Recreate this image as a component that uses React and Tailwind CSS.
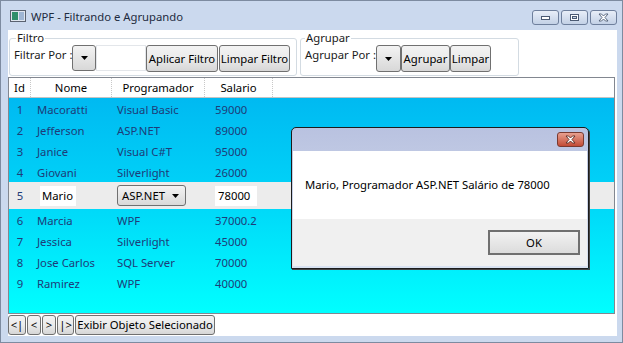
import React from 'react';

const rows = [
  { id: 1, nome: 'Macoratti', prog: 'Visual Basic', sal: '59000' },
  { id: 2, nome: 'Jefferson', prog: 'ASP.NET', sal: '89000' },
  { id: 3, nome: 'Janice', prog: 'Visual C#T', sal: '95000' },
  { id: 4, nome: 'Giovani', prog: 'Silverlight', sal: '26000' },
  { id: 5, nome: 'Mario', prog: 'ASP.NET', sal: '78000', editing: true },
  { id: 6, nome: 'Marcia', prog: 'WPF', sal: '37000.2' },
  { id: 7, nome: 'Jessica', prog: 'Silverlight', sal: '45000' },
  { id: 8, nome: 'Jose Carlos', prog: 'SQL Server', sal: '70000' },
  { id: 9, nome: 'Ramirez', prog: 'WPF', sal: '40000' },
];

const btn =
  'h-full flex items-center justify-center rounded-[3px] border border-[#707070] bg-gradient-to-b from-[#f3f3f3] via-[#ebebeb] to-[#d6d6d6] text-black whitespace-nowrap';

// Little drop arrow used by the combo boxes
function Arrow() {
  return (
    <svg width="7" height="4" viewBox="0 0 7 4">
      <path d="M0 0h7L3.5 4z" fill="#000" />
    </svg>
  );
}

function CaptionButton({ kind }) {
  return (
    <div className="w-[27px] h-[15px] rounded-[3px] border border-[#6e7f9c] bg-gradient-to-b from-[#e8eef8] to-[#c3d1e6] flex items-center justify-center">
      {kind === 'min' && (
        <svg width="11" height="7" viewBox="0 0 11 7">
          <rect x="1.5" y="2.5" width="8" height="3" fill="#fff" stroke="#4b5a73" />
        </svg>
      )}
      {kind === 'max' && (
        <svg width="11" height="9" viewBox="0 0 11 9">
          <rect x="1.5" y="1.5" width="8" height="6" fill="#fff" stroke="#4b5a73" />
          <rect x="3.5" y="3.5" width="4" height="2" fill="#c8d4e6" stroke="#4b5a73" />
        </svg>
      )}
      {kind === 'close' && (
        <svg width="13" height="9" viewBox="0 0 13 9">
          <path d="M2 1h2.5l2 2 2-2H11L8 4.5 11 8H8.5l-2-2-2 2H2l3-3.5z" fill="#fff" stroke="#4b5a73" strokeWidth="0.9" />
        </svg>
      )}
    </div>
  );
}

export default function App() {
  return (
    <div className="relative w-[623px] h-[343px] bg-[#cbd9ee] border border-[#7d8ba0] overflow-hidden font-['Segoe_UI','Noto_Sans',sans-serif] text-[11.3px] leading-[16px]">
      {/* Title bar */}
      <div className="h-[29px] flex items-center">
        <div className="ml-[9px] w-[16px] h-[12px] border border-[#5a6270] bg-[#dfe6ef] flex p-[1px] gap-[1px]">
          <div className="w-[6px] h-full bg-[#2f8f6a]" />
          <div className="flex-1 h-full bg-[#9fb6d4]" />
        </div>
        <span className="ml-[5px] mt-[2px] text-[#1e2b40]">WPF - Filtrando e Agrupando</span>
        <div className="ml-auto mr-[5px] flex gap-[2px] self-start mt-[9px]">
          <CaptionButton kind="min" />
          <CaptionButton kind="max" />
          <CaptionButton kind="close" />
        </div>
      </div>

      {/* Client area */}
      <div className="ml-[7px] w-[609px] h-[306px] bg-white flex flex-col">
        <div className="flex pt-[1px] h-[47px]">
          <fieldset className="ml-[1px] w-[288px] h-[45px] border border-[#d3dbe2] rounded-[3px]">
            <legend className="ml-[6px] px-[1px] leading-[14px] text-[#1a1a1a]">Filtro</legend>
            <div className="flex h-[27px] pl-[4px]">
              <span className="w-[58px] whitespace-nowrap pt-[2px] text-[#1a1a1a]">Filtrar Por :</span>
              <div className="w-[24px] h-[26px] rounded-[3px] border border-[#707070] bg-gradient-to-b from-[#f3f3f3] to-[#d8d8d8] flex items-center justify-center">
                <Arrow />
              </div>
              <div className="w-[50px] h-[26px] border border-[#e3e6ea]" />
              <div className={`${btn} w-[72px]`}>Aplicar Filtro</div>
              <div className={`${btn} w-[71px] ml-[1px]`}>Limpar Filtro</div>
            </div>
          </fieldset>

          <fieldset className="ml-[3px] w-[219px] h-[45px] border border-[#d3dbe2] rounded-[3px]">
            <legend className="ml-[4px] px-[1px] leading-[14px] text-[#1a1a1a]">Agrupar</legend>
            <div className="flex h-[27px] pl-[4px]">
              <span className="w-[71px] whitespace-nowrap pt-[2px] text-[#1a1a1a]">Agrupar Por :</span>
              <div className="w-[25px] h-[27px] rounded-[3px] border border-[#707070] bg-gradient-to-b from-[#f3f3f3] to-[#d8d8d8] flex items-center justify-center">
                <Arrow />
              </div>
              <div className={`${btn} w-[49px]`}>Agrupar</div>
              <div className={`${btn} w-[41px]`}>Limpar</div>
            </div>
          </fieldset>
        </div>

        {/* Data grid */}
        <div className="w-[607px] h-[237px] border border-[#828790] flex flex-col bg-gradient-to-b from-[#00b4f0] via-[#00d4f8] to-[#00ffff]">
          <div className="h-[20px] bg-white border-b border-[#c4c4c4] flex items-center text-black shrink-0">
            <div className="w-[22px] h-full flex items-center justify-center border-r border-dotted border-[#c8c8c8]">Id</div>
            <div className="w-[81px] h-full flex items-center justify-center border-r border-dotted border-[#c8c8c8]">Nome</div>
            <div className="w-[93px] h-full flex items-center justify-center border-r border-dotted border-[#c8c8c8]">Programador</div>
            <div className="w-[68px] h-full flex items-center justify-center border-r border-dotted border-[#c8c8c8]">Salario</div>
          </div>

          {rows.map((r) =>
            r.editing ? (
              <div key={r.id} className="h-[27px] bg-[#ececec] flex items-center text-[#1e3c78]">
                <div className="w-[22px] text-center">{r.id}</div>
                <div className="w-[81px] pl-[9px]">
                  <div className="w-[36px] h-[20px] bg-white pl-[2px] flex items-center text-black">{r.nome}</div>
                </div>
                <div className="w-[93px] pl-[5px]">
                  <div className="w-[69px] h-[21px] rounded-[3px] border border-[#707070] bg-gradient-to-b from-[#f3f3f3] to-[#d9d9d9] flex items-center pl-[4px] pr-[6px] text-black">
                    <span className="flex-1">{r.prog}</span>
                    <Arrow />
                  </div>
                </div>
                <div className="w-[68px] pl-[10px]">
                  <div className="w-[42px] h-[20px] bg-white pl-[3px] flex items-center text-black">{r.sal}</div>
                </div>
              </div>
            ) : (
              <div key={r.id} className="h-[21px] pt-[3px] flex items-center text-[#1e3c78] shrink-0">
                <div className="w-[22px] text-center">{r.id}</div>
                <div className="w-[81px] pl-[6px] whitespace-nowrap">{r.nome}</div>
                <div className="w-[93px] pl-[5px] whitespace-nowrap">{r.prog}</div>
                <div className="w-[68px] pl-[10px]">{r.sal}</div>
              </div>
            )
          )}
        </div>

        {/* Navigation buttons */}
        <div className="flex gap-[1px] h-[20px] mt-[1px]">
          <div className={`${btn} w-[18px]`}>&lt;|</div>
          <div className={`${btn} w-[14px]`}>&lt;</div>
          <div className={`${btn} w-[14px]`}>&gt;</div>
          <div className={`${btn} w-[17px]`}>|&gt;</div>
          <div className={`${btn} w-[140px]`}>Exibir Objeto Selecionado</div>
        </div>
      </div>

      {/* Message box */}
      <div className="absolute left-[290px] top-[126px] w-[298px] h-[142px] border border-[#1c1c1c] rounded-t-[5px] bg-gradient-to-b from-[#b9c2e0] to-[#d9e2f1] flex flex-col px-[1px] pb-[2px] shadow-[1px_1px_0_#444]">
        <div className="h-[23px] flex justify-end items-start pt-[4px] pr-[3px] shrink-0">
          <div className="w-[27px] h-[15px] rounded-[3px] border border-[#7a3a30] bg-gradient-to-b from-[#e8a090] to-[#c24a34] flex items-center justify-center">
            <svg width="13" height="9" viewBox="0 0 13 9">
              <path d="M2 1h2.5l2 2 2-2H11L8 4.5 11 8H8.5l-2-2-2 2H2l3-3.5z" fill="#fff" stroke="#5a2a22" strokeWidth="0.9" />
            </svg>
          </div>
        </div>
        <div className="flex-1 flex flex-col bg-white">
          <div className="h-[68px] flex items-center pl-[12px] text-black">
            Mario, Programador ASP.NET Salário de 78000
          </div>
          <div className="flex-1 bg-[#f0f0f0] flex justify-end items-start pt-[11px] pr-[7px]">
            <div className="w-[92px] h-[25px] border-2 border-[#707070] bg-gradient-to-b from-[#f2f2f2] to-[#dcdcdc] flex items-center justify-center text-black">
              OK
            </div>
          </div>
        </div>
      </div>
    </div>
  );
}
